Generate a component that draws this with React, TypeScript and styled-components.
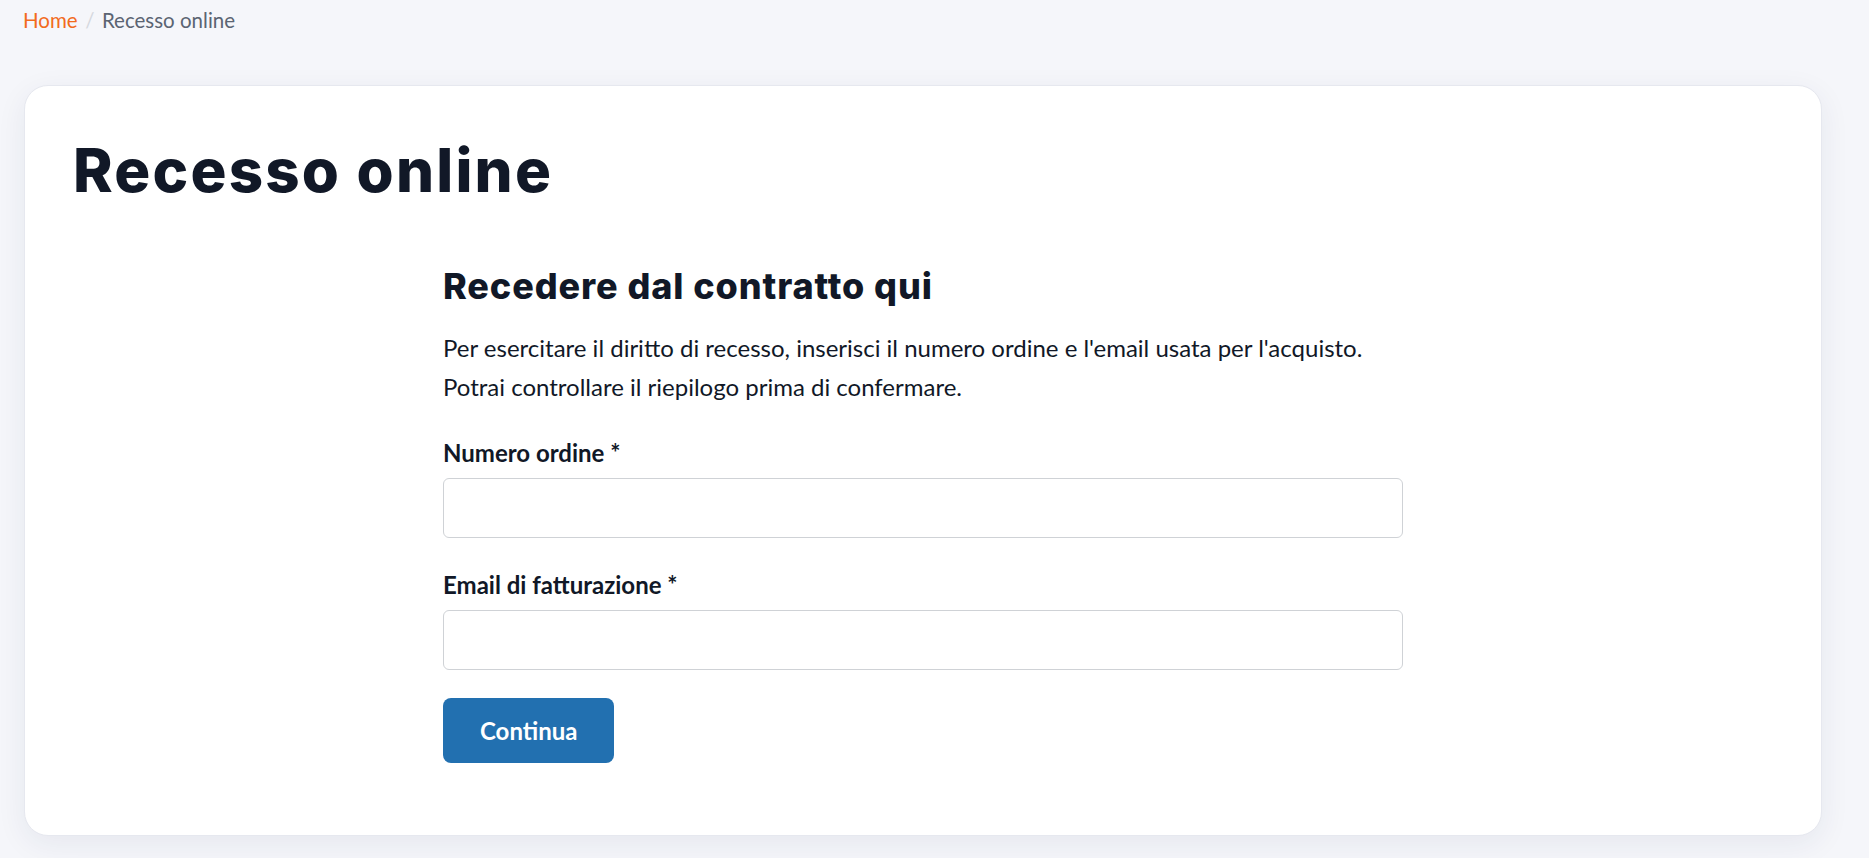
import React from "react";
import styled, { createGlobalStyle } from "styled-components";

const GlobalStyle = createGlobalStyle`
  * { box-sizing: border-box; }
  html, body { margin: 0; padding: 0; }
  body {
    background: #f5f6fa;
    font-family: "Lato", "Liberation Sans", sans-serif;
    color: #111827;
  }
`;

const Page = styled.div`
  min-height: 100vh;
  background: #f5f6fa;
  padding: 0 47px 24px 24px;
`;

const Breadcrumb = styled.nav`
  height: 40px;
  margin-left: -1px;
  display: flex;
  align-items: center;
  gap: 7.5px;
  font-size: 20.5px;
`;

const Crumb = styled.a<{ $active?: boolean }>`
  color: ${(p) => (p.$active ? "#5b6472" : "#f26b1d")};
  text-decoration: none;
`;

const Sep = styled.span`
  color: #d6d9df;
`;

const Card = styled.section`
  margin-top: 45px;
  background: #ffffff;
  border: 1px solid #e6e8ef;
  border-radius: 24px;
  box-shadow: 0 8px 30px rgba(30, 40, 90, 0.07);
  padding: 50px 48px 72px;
`;

const Title = styled.h1`
  margin: 0;
  font-family: "Inter", sans-serif;
  font-weight: 800;
  font-size: 60px;
  line-height: 1.15;
  letter-spacing: 2.2px;
  color: #111827;
`;

const FormColumn = styled.div`
  width: 960px;
  margin: 60px auto 0;
`;

const SubTitle = styled.h2`
  margin: 0;
  font-family: "Inter", sans-serif;
  font-weight: 800;
  font-size: 36px;
  line-height: 1.2;
  letter-spacing: 0.9px;
  color: #111827;
`;

const Intro = styled.p`
  margin: 20px 0 0;
  font-size: 24px;
  line-height: 39px;
  color: #111827;
`;

const Field = styled.div<{ $first?: boolean }>`
  display: flex;
  flex-direction: column;
  gap: 10px;
  margin-top: ${(p) => (p.$first ? "32px" : "32px")};
`;

const Label = styled.label`
  font-size: 24px;
  font-weight: 700;
  line-height: 30px;
  color: #111827;
`;

const Input = styled.input`
  height: 60px;
  width: 100%;
  border: 1px solid #cfd2d6;
  border-radius: 6px;
  background: #fff;
  font-family: inherit;
  font-size: 20px;
  padding: 0 16px;
  outline: none;
`;

const Button = styled.button`
  margin-top: 28px;
  height: 65px;
  padding: 0 37px;
  border: none;
  border-radius: 8px;
  background: #2270b0;
  color: #ffffff;
  font-family: "Lato", sans-serif;
  font-weight: 700;
  font-size: 24px;
  cursor: pointer;
`;

export default function App() {
  return (
    <>
      <GlobalStyle />
      <Page>
        <Breadcrumb>
          <Crumb href="#">Home</Crumb>
          <Sep>/</Sep>
          <Crumb $active>Recesso online</Crumb>
        </Breadcrumb>
        <Card>
          <Title>Recesso online</Title>
          <FormColumn>
            <SubTitle>Recedere dal contratto qui</SubTitle>
            <Intro>
              Per esercitare il diritto di recesso, inserisci il numero ordine e l'email usata per l'acquisto.
              <br />
              Potrai controllare il riepilogo prima di confermare.
            </Intro>
            <Field $first>
              <Label htmlFor="order">Numero ordine *</Label>
              <Input id="order" type="text" />
            </Field>
            <Field>
              <Label htmlFor="email">Email di fatturazione *</Label>
              <Input id="email" type="email" />
            </Field>
            <Button type="button">Continua</Button>
          </FormColumn>
        </Card>
      </Page>
    </>
  );
}
